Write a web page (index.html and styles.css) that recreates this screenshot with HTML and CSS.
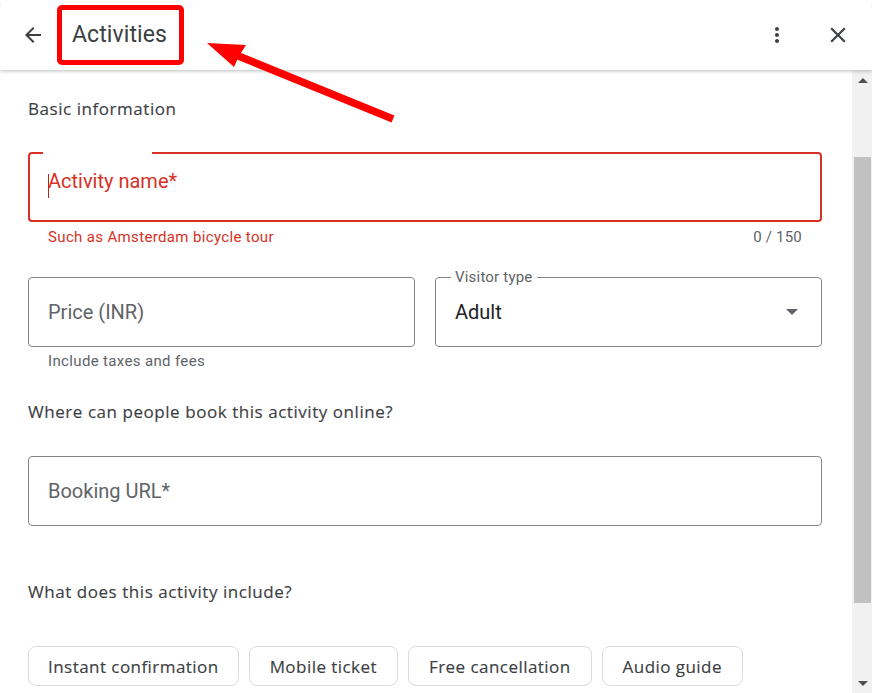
FILE: index.html
```html
<!DOCTYPE html>
<html lang="en">
<head>
<meta charset="utf-8">
<title>Activities</title>
<link rel="stylesheet" href="styles.css">
</head>
<body>
<div class="app">
  <header class="topbar">
    <button class="icon-btn back" aria-label="Back">
      <svg width="24" height="24" viewBox="0 0 24 24"><path d="M20 11H7.83l5.59-5.59L12 4l-8 8 8 8 1.41-1.41L7.83 13H20v-2z" fill="#3c4043"/></svg>
    </button>
    <h1 class="title">Activities</h1>
    <div class="spacer"></div>
    <button class="icon-btn more" aria-label="More">
      <svg width="24" height="24" viewBox="0 0 24 24"><path d="M12 8c1.1 0 2-.9 2-2s-.9-2-2-2-2 .9-2 2 .9 2 2 2zm0 2c-1.1 0-2 .9-2 2s.9 2 2 2 2-.9 2-2-.9-2-2-2zm0 6c-1.1 0-2 .9-2 2s.9 2 2 2 2-.9 2-2-.9-2-2-2z" fill="#3c4043"/></svg>
    </button>
    <button class="icon-btn close" aria-label="Close">
      <svg width="26" height="26" viewBox="0 0 24 24"><path d="M19 6.41L17.59 5 12 10.59 6.41 5 5 6.41 10.59 12 5 17.590 6.41 19 12 13.41 17.59 19 19 17.59 13.41 12z" fill="#3c4043"/></svg>
    </button>
  </header>
  <div class="main">
    <div class="content">
      <h2 class="section first">Basic information</h2>

      <div class="field error">
        <span class="notch"></span>
        <div class="field-value"><span class="caret"></span><span class="placeholder raised">Activity name*</span></div>
      </div>
      <div class="helper error-text">
        <span>Such as Amsterdam bicycle tour</span>
        <span class="counter">0 / 150</span>
      </div>

      <div class="row">
        <div class="col">
          <div class="field">
            <div class="field-value"><span class="placeholder">Price (INR)</span></div>
          </div>
          <div class="helper"><span>Include taxes and fees</span></div>
        </div>
        <div class="col">
          <div class="field select">
            <span class="float-label">Visitor type</span>
            <div class="field-value"><span class="value">Adult</span><span class="drop"></span></div>
          </div>
        </div>
      </div>

      <h2 class="section online">Where can people book this activity online?</h2>
      <div class="field">
        <div class="field-value"><span class="placeholder">Booking URL*</span></div>
      </div>

      <h2 class="section include">What does this activity include?</h2>
      <div class="chips">
        <span class="chip">Instant confirmation</span>
        <span class="chip">Mobile ticket</span>
        <span class="chip">Free cancellation</span>
        <span class="chip">Audio guide</span>
      </div>
    </div>
    <div class="scrollbar">
      <div class="sb-btn"><span class="tri up"></span></div>
      <div class="sb-track">
        <div class="sb-thumb"></div>
      </div>
      <div class="sb-btn bottom"><span class="tri down"></span></div>
    </div>
  </div>
  <svg class="annotation" width="872" height="693" viewBox="0 0 872 693">
    <line x1="236" y1="55" x2="393" y2="119" stroke="#ff0000" stroke-width="7.5"/>
    <polygon points="207,43 246,45 239,56 234,67" fill="#ff0000"/>
  </svg>
</div>
</body>
</html>
```
FILE: styles.css
```css
* { box-sizing: border-box; }
html, body { margin: 0; padding: 0; }
body {
  width: 872px;
  height: 693px;
  overflow: hidden;
  background: #ffffff;
  font-family: Roboto, "Liberation Sans", Arial, sans-serif;
  color: #3c4043;
}
.app {
  position: relative;
  width: 872px;
  height: 693px;
  display: flex;
  flex-direction: column;
  background: #fff;
  border-radius: 8px 8px 0 0;
  overflow: hidden;
}
.topbar {
  height: 70px;
  flex: 0 0 70px;
  display: flex;
  align-items: center;
  padding: 0 10px 0 10px;
  background: #fff;
  box-shadow: 0 1px 3px rgba(60,64,67,0.25), 0 2px 5px rgba(60,64,67,0.08);
  position: relative;
  z-index: 2;
}
.icon-btn {
  border: 0;
  background: transparent;
  padding: 0;
  width: 48px;
  height: 48px;
  display: flex;
  align-items: center;
  justify-content: center;
}
.back { margin-left: -1px; }
.title {
  margin: 0;
  font-family: Roboto, "Liberation Sans", Arial, sans-serif;
  font-weight: 400;
  font-size: 23px;
  line-height: 50px;
  height: 60px;
  padding: 0 12px 0 10px;
  border: 5px solid #ff0000;
  border-radius: 5px;
  color: #3c4043;
  letter-spacing: 0.1px;
}
.spacer { flex: 1; }
.more { margin-right: 13px; }
.close { margin-right: 0; }
.main {
  flex: 1;
  display: flex;
  min-height: 0;
}
.content {
  flex: 1;
  padding: 29px 30px 0 28px;
  overflow: hidden;
}
.section {
  margin: 0;
  font-family: "Open Sans", Roboto, sans-serif;
  font-weight: 500;
  font-size: 17px;
  line-height: 20px;
  color: #3c4043;
  letter-spacing: 0.55px;
  -webkit-text-stroke: 0.15px #3c4043;
}
.section.first { margin-bottom: 33px; }
.section.online { margin-top: 33px; margin-bottom: 34px; }
.section.include { margin-top: 56px; margin-bottom: 44px; }
.field {
  position: relative;
  height: 70px;
  border: 1px solid #80868b;
  border-radius: 4px;
  display: flex;
  align-items: center;
  padding: 0 19px;
}
.field.error {
  border: 2px solid #d93025;
  padding: 0 18px;
}
.notch {
  position: absolute;
  top: -2px;
  left: 13px;
  width: 109px;
  height: 2px;
  background: #fff;
}
.field-value {
  flex: 1;
  display: flex;
  align-items: center;
  font-size: 20px;
  line-height: 24px;
  position: relative;
}
.caret {
  display: inline-block;
  width: 1px;
  height: 24px;
  background: #b3261e;
  margin-right: -1px;
  position: relative;
  top: -1px;
}
.placeholder { color: #5f6368; }
.placeholder.raised { position: relative; top: -6px; }
.field.error .placeholder { color: #d93025; }
.helper {
  display: flex;
  justify-content: space-between;
  padding: 0 20px;
  font-size: 15px;
  line-height: 16px;
  margin-top: 7px;
  color: #5f6368;
  letter-spacing: 0.35px;
}
.error-text { color: #d93025; }
.counter { color: #5f6368; letter-spacing: 0.2px; }
.row {
  display: flex;
  gap: 20px;
  margin-top: 32px;
}
.col { flex: 1; }
.col .helper { margin-top: 6px; }
.float-label {
  position: absolute;
  top: -9px;
  left: 15px;
  padding: 0 4px;
  background: #fff;
  font-size: 15px;
  line-height: 16px;
  color: #5f6368;
  letter-spacing: 0.2px;
}
.value { color: #202124; flex: 1; }
.drop {
  width: 0;
  height: 0;
  border-left: 6px solid transparent;
  border-right: 6px solid transparent;
  border-top: 6px solid #5f6368;
  margin-right: 4px;
}
.chips {
  display: flex;
  gap: 10px;
}
.chip {
  height: 40px;
  display: inline-flex;
  align-items: center;
  padding: 0 20px;
  border: 1px solid #dadce0;
  border-radius: 8px;
  font-family: "Open Sans", Roboto, sans-serif;
  font-size: 17px;
  font-weight: 500;
  letter-spacing: 0.45px;
  color: #3c4043;
  -webkit-text-stroke: 0.15px #3c4043;
}
.chip:first-child { padding: 0 19px; }
.scrollbar {
  width: 20px;
  flex: 0 0 20px;
  background: #f1f1f1;
  display: flex;
  flex-direction: column;
}
.sb-btn {
  height: 20px;
  flex: 0 0 20px;
  display: flex;
  align-items: center;
  justify-content: center;
  padding-left: 2px;
}
.sb-track {
  flex: 1;
  padding: 67px 1px 0 2px;
}
.sb-thumb {
  height: 446px;
  background: #c1c1c1;
}
.tri {
  width: 0;
  height: 0;
  border-left: 5px solid transparent;
  border-right: 5px solid transparent;
}
.tri.up { border-bottom: 5px solid #505050; }
.tri.down { border-top: 5px solid #505050; }
.annotation {
  position: absolute;
  left: 0;
  top: 0;
  pointer-events: none;
  z-index: 5;
}
```
